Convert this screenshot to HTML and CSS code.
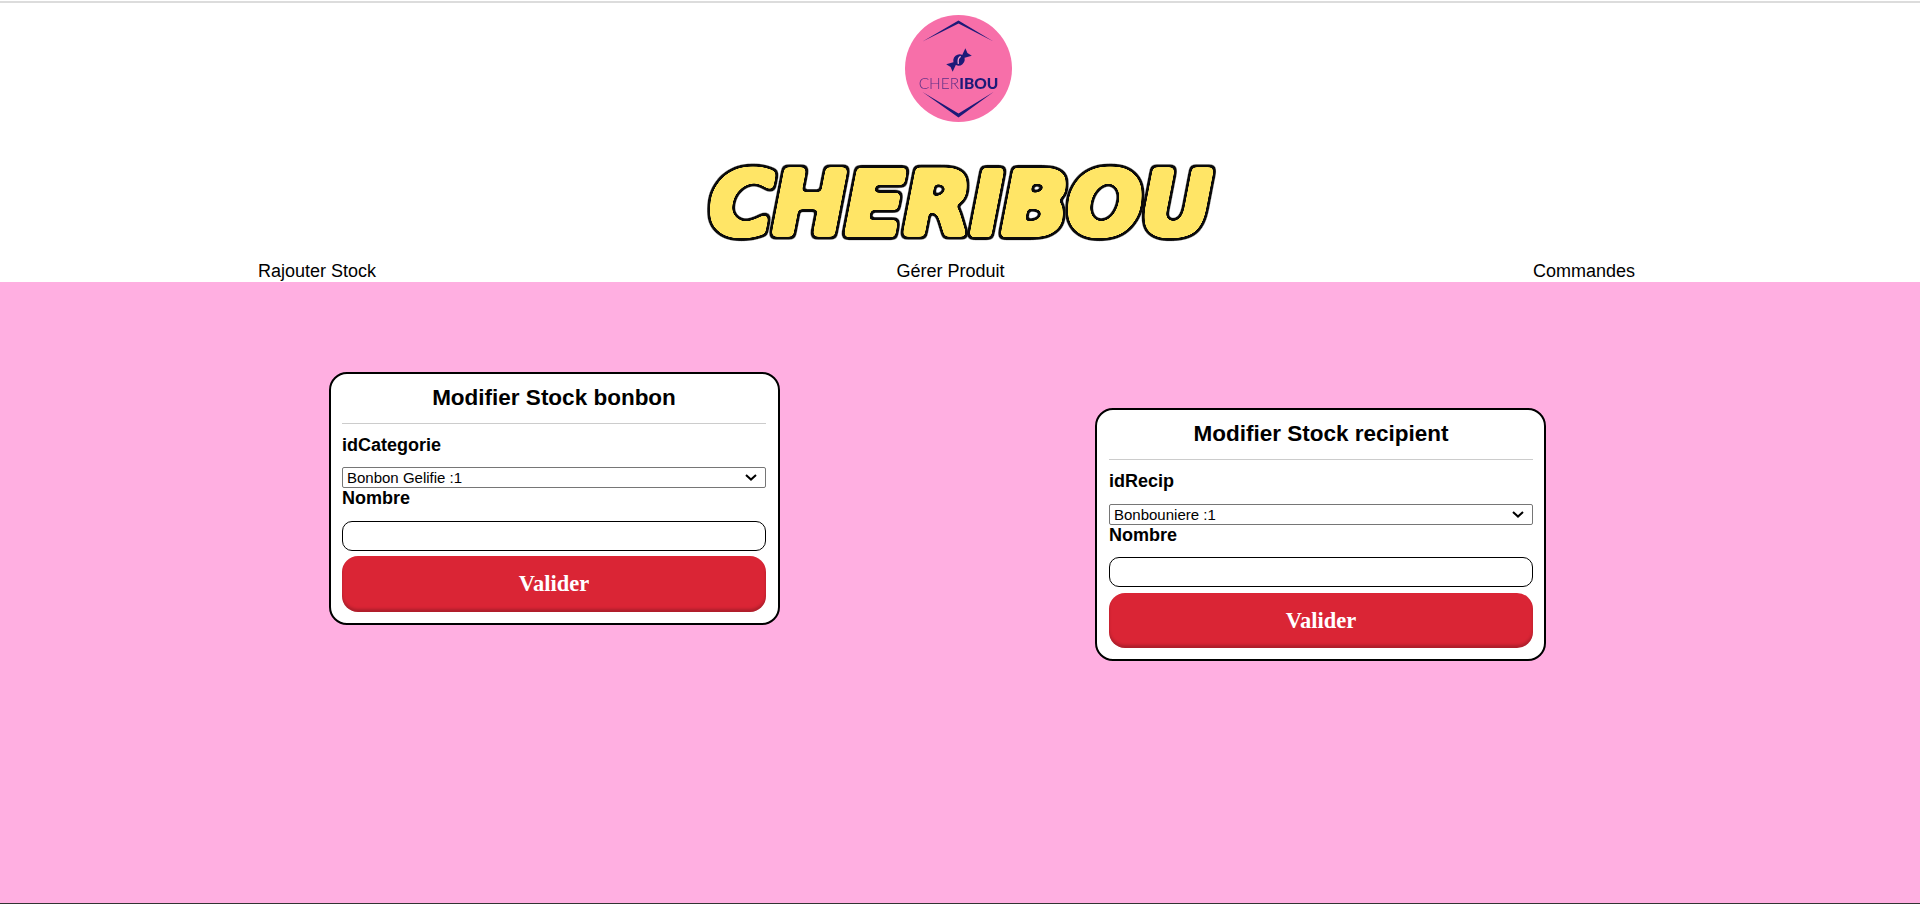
FILE: index.html
```html
<!DOCTYPE html>
<html lang="fr">
<head>
<meta charset="utf-8">
<title>Cheribou</title>
<link rel="stylesheet" href="styles.css">
</head>
<body>
<div class="topline"></div>
<header class="header">
  <svg class="logo" viewBox="0 0 107 107" width="107" height="107" role="img" aria-label="Cheribou">
    <circle cx="53.5" cy="53.5" r="53.5" fill="#f76fa9"/>
    <polygon points="17.5,26.5 53.5,5.5 88.5,26.5 53.5,8.5" fill="#1c1a78"/>
    <polygon points="17.5,77 53.5,98.5 88.5,77 53.5,102.5" fill="#1c1a78"/>
    <g transform="translate(54 45) rotate(-40)" fill="#1c1a78">
      <ellipse cx="0" cy="0" rx="6" ry="5.4"/>
      <polygon points="-5,-1.5 -12.5,-5 -11,0 -12.5,5 -5,1.5"/>
      <polygon points="5,-1.5 12.5,-5 11,0 12.5,5 5,1.5"/>
      <path d="M-3 2.6 Q0 -2.6 3.6 -1.6" fill="none" stroke="#f9a5cf" stroke-width="1.3"/>
    </g>
    <text class="logo-text" x="53.5" y="73.5" text-anchor="middle"><tspan class="logo-light">CHER</tspan><tspan class="logo-bold">IBOU</tspan></text>
  </svg>
  <h1 class="brand"><span class="glyph">C</span><span class="glyph">H</span><span class="glyph">E</span><span class="glyph">R</span><span class="glyph">I</span><span class="glyph">B</span><span class="glyph">O</span><span class="glyph">U</span></h1>
  <nav class="nav">
    <a class="nav-link" href="#">Rajouter Stock</a>
    <a class="nav-link nav-mid" href="#">Gérer Produit</a>
    <a class="nav-link" href="#">Commandes</a>
  </nav>
</header>
<main class="main">
  <form class="card card-first">
    <h2 class="card-title">Modifier Stock bonbon</h2>
    <hr class="rule">
    <label class="field-label label-first">idCategorie</label>
    <select class="field-select"><option>Bonbon Gelifie :1</option></select>
    <label class="field-label">Nombre</label>
    <input class="field-input" type="text">
    <button class="submit" type="button">Valider</button>
  </form>
  <form class="card card-second">
    <h2 class="card-title">Modifier Stock recipient</h2>
    <hr class="rule">
    <label class="field-label label-first">idRecip</label>
    <select class="field-select"><option>Bonbouniere :1</option></select>
    <label class="field-label">Nombre</label>
    <input class="field-input" type="text">
    <button class="submit" type="button">Valider</button>
  </form>
</main>
<svg class="defs" width="0" height="0" aria-hidden="true">
  <filter id="blob" x="-30%" y="-20%" width="160%" height="140%" color-interpolation-filters="sRGB">
    <feMorphology in="SourceAlpha" operator="dilate" radius="1.6" result="fat"/>
    <feGaussianBlur in="fat" stdDeviation="2.2" result="soft"/>
    <feComponentTransfer in="soft" result="innerMask"><feFuncA type="linear" slope="12" intercept="-5"/></feComponentTransfer>
    <feComponentTransfer in="soft" result="outerMask"><feFuncA type="linear" slope="12" intercept="-0.5"/></feComponentTransfer>
    <feFlood flood-color="#0b0b0b" result="ink"/>
    <feComposite in="ink" in2="outerMask" operator="in" result="outline"/>
    <feFlood flood-color="#ffe566" result="sun"/>
    <feComposite in="sun" in2="innerMask" operator="in" result="fill"/>
    <feMerge><feMergeNode in="outline"/><feMergeNode in="fill"/></feMerge>
  </filter>
</svg>
</body>
</html>
```
FILE: styles.css
```css
* { box-sizing: border-box; }
html, body { margin: 0; height: 100%; }
body {
  display: flex;
  flex-direction: column;
  height: 904px;
  overflow: hidden;
  background: #fff;
  color: #000;
  font-family: "Liberation Sans", Arial, sans-serif;
}
.topline { height: 2px; margin-top: 1px; background: #dcdcdc; flex: none; }
.header { display: flex; flex-direction: column; align-items: center; flex: none; }
.logo { display: block; margin: 12px 3px 0 0; filter: blur(0.3px); }
.logo-text { font-family: "Lato", "Liberation Sans", sans-serif; font-size: 15.5px; fill: #1c1a78; }
.logo-light { font-weight: 300; fill: #5c2f86; }
.logo-bold { font-weight: 900; }
.brand {
  display: flex;
  margin: 38px 0 0;
  height: 84px;
  font-family: "DejaVu Sans", sans-serif;
  font-style: italic;
  font-weight: 700;
  font-size: 89px;
  line-height: 88px;
}
.glyph { display: block; margin-right: -2px; filter: url(#blob); }
.nav {
  display: flex;
  justify-content: space-between;
  width: 100%;
  padding: 0 285px 0 258px;
  margin-top: 16px;
  height: 22px;
}
.nav-link { color: #000; text-decoration: none; font-size: 18px; line-height: 22px; }
.nav-mid { margin-right: 8px; }
.main {
  flex: 1;
  display: flex;
  align-items: flex-start;
  gap: 315px;
  padding-left: 329px;
  background: #ffafe1;
  border-bottom: 1px solid #333;
}
.card {
  display: flex;
  flex-direction: column;
  width: 451px;
  height: 253px;
  padding: 0 12px 0 11px;
  background: #fff;
  border: 2px solid #000;
  border-radius: 18px;
}
.card-first { margin-top: 90px; }
.card-second { margin-top: 126px; padding: 0 11px 0 12px; }
.card-title { margin: 11px 0 0; font-size: 22.5px; line-height: 26px; font-weight: 700; text-align: center; }
.rule { width: 100%; margin: 12px 0 0; border: 0; border-top: 1px solid #ccc; }
.field-label { display: block; font-size: 18px; line-height: 21px; font-weight: 700; }
.label-first { margin-top: 11px; margin-bottom: 11px; }
.card-second .label-first { margin-bottom: 12px; }
.field-select {
  display: block;
  width: 100%;
  height: 21px;
  padding: 0 24px 0 4px;
  font-family: "Liberation Sans", Arial, sans-serif;
  font-size: 15px;
  color: #000;
  border: 1px solid #767676;
  border-radius: 2px;
  appearance: none;
  -webkit-appearance: none;
  background: #fff url("data:image/svg+xml,%3Csvg xmlns='http://www.w3.org/2000/svg' width='12' height='7'%3E%3Cpath d='M1 1l5 4.6L11 1' fill='none' stroke='%23000' stroke-width='2'/%3E%3C/svg%3E") no-repeat right 8px center;
}
.field-input {
  display: block;
  width: 100%;
  height: 30px;
  margin-top: 12px;
  border: 1px solid #000;
  border-radius: 10px;
  background: #fff;
}
.card-second .field-input { margin-top: 11px; }
.submit {
  display: block;
  width: 100%;
  height: 56px;
  margin-top: 5px;
  border: 0;
  border-radius: 16px;
  background: #da2535;
  color: #fff;
  font-family: "Liberation Serif", "Times New Roman", serif;
  font-size: 22.5px;
  font-weight: 700;
  box-shadow: inset 0 -3px 3px rgba(0, 0, 0, 0.2);
}
.card-second .submit { margin-top: 6px; height: 55px; }
.defs { position: absolute; }
```
